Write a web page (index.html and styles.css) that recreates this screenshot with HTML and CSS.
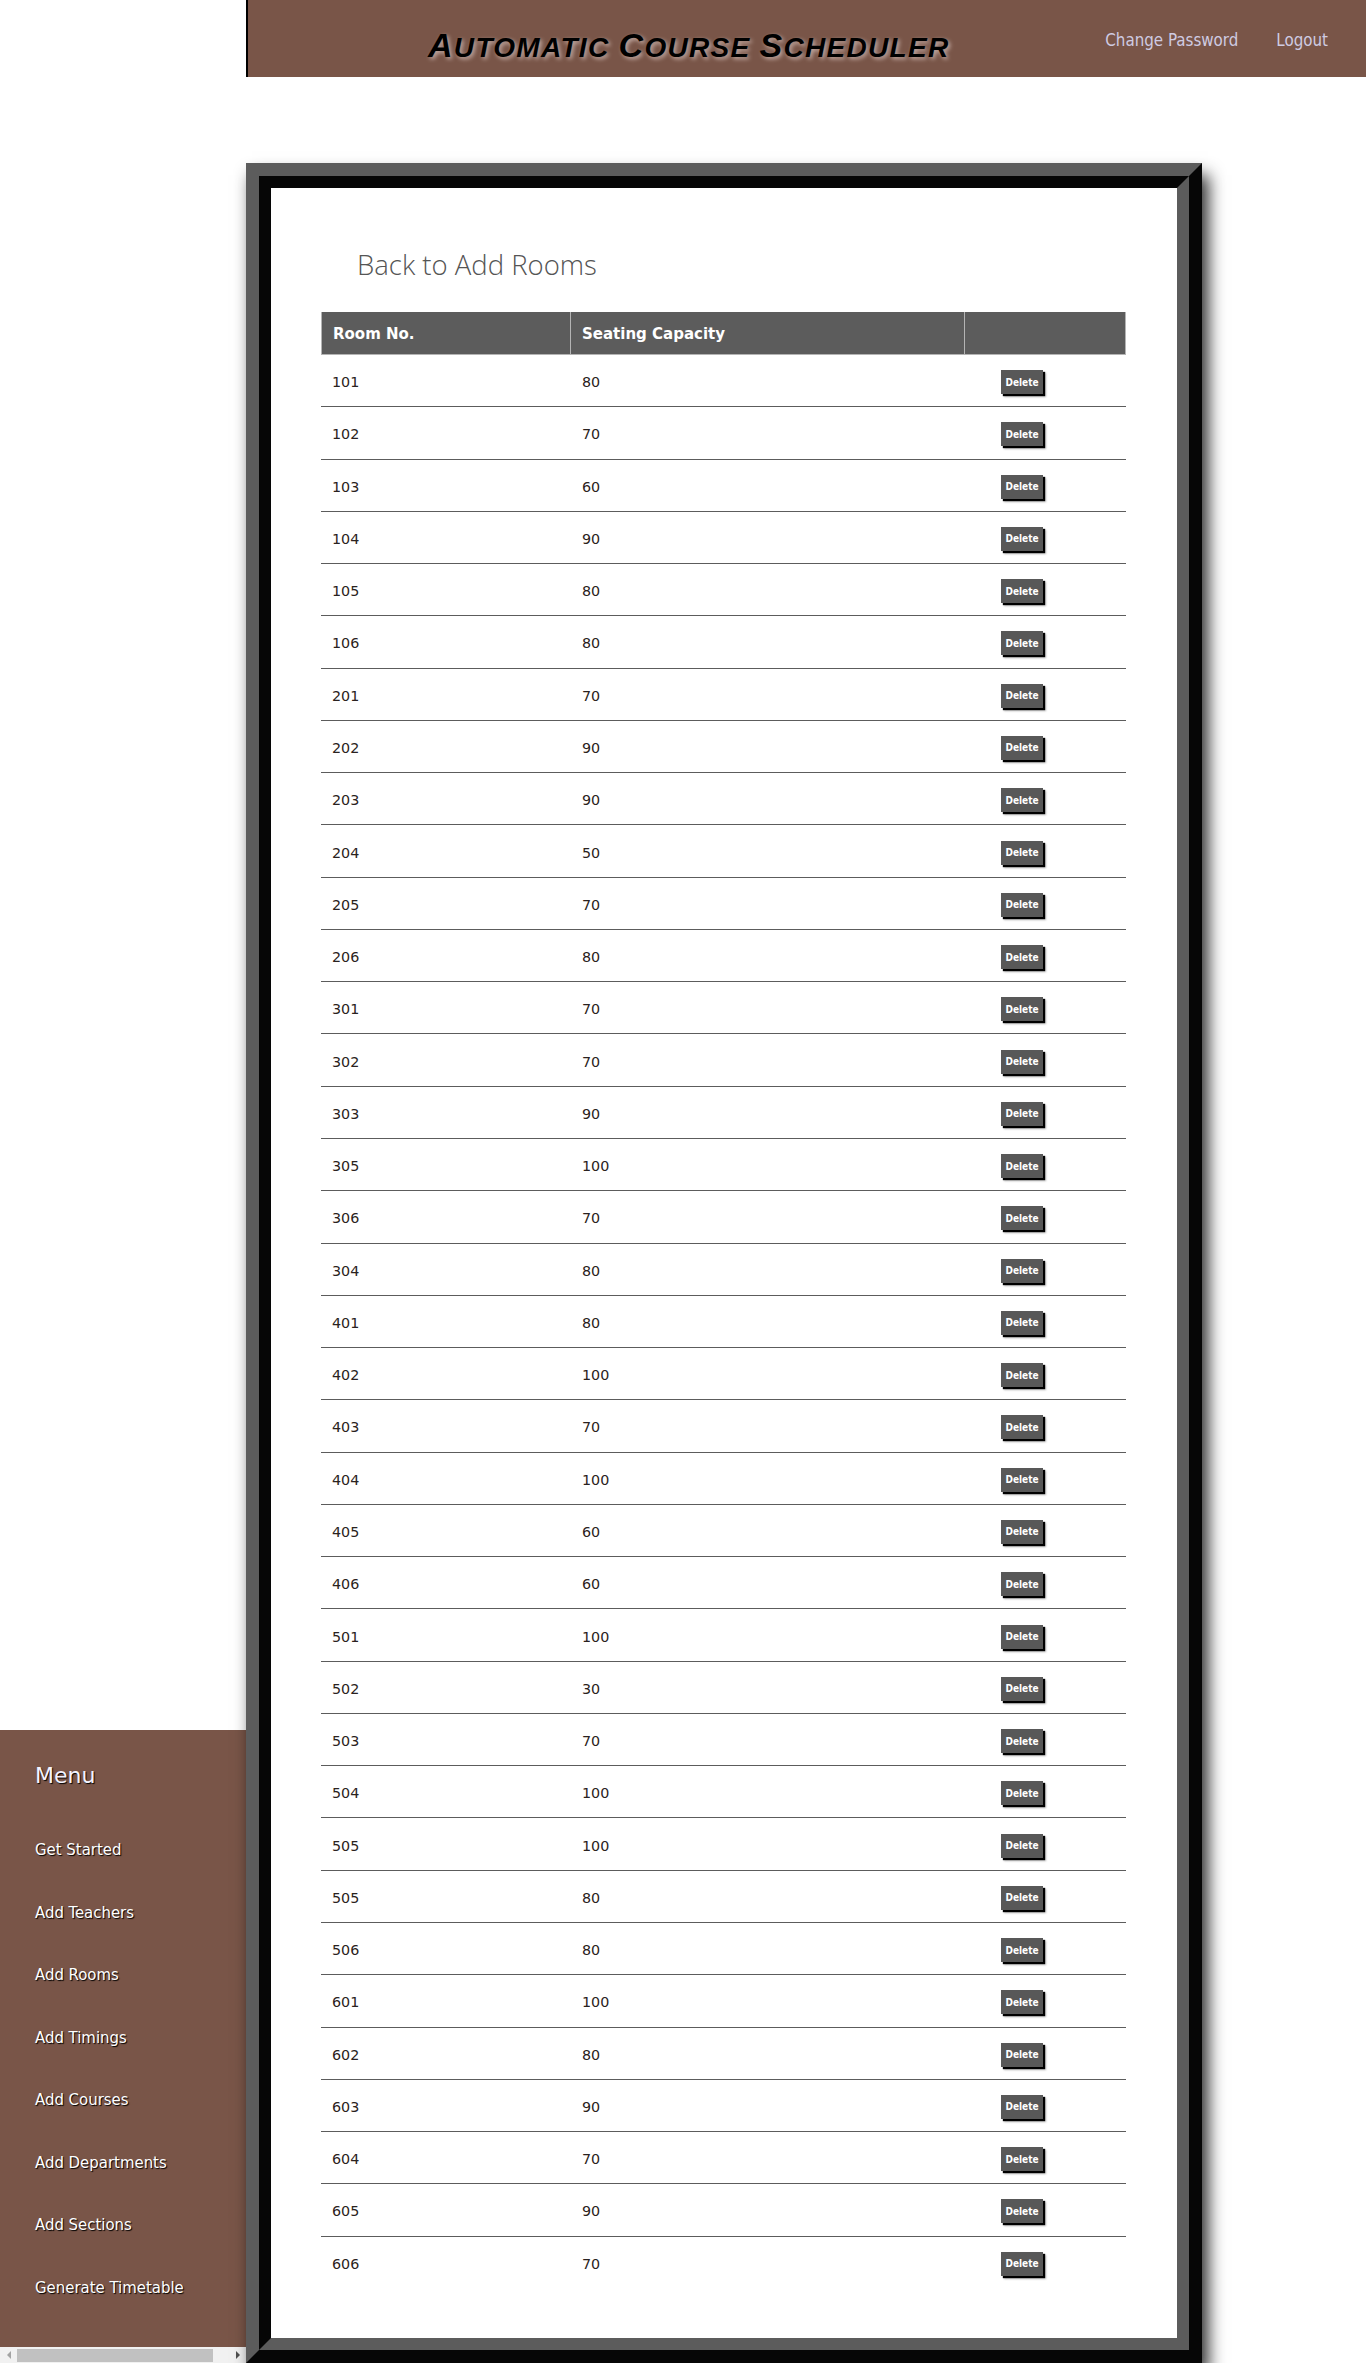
FILE: index.html
```html
<!DOCTYPE html>
<html lang="en">
<head>
<meta charset="utf-8">
<title>Automatic Course Scheduler - Rooms</title>
<link rel="stylesheet" href="styles.css">
</head>
<body>
<div class="layout">
  <aside class="sidebar">
    <div class="menu-title">Menu</div>
    <nav class="menu">
      <a href="#">Get Started</a>
      <a href="#">Add Teachers</a>
      <a href="#">Add Rooms</a>
      <a href="#">Add Timings</a>
      <a href="#">Add Courses</a>
      <a href="#">Add Departments</a>
      <a href="#">Add Sections</a>
      <a href="#">Generate Timetable</a>
    </nav>
    <div class="hscroll">
      <span class="arrow arrow-left"></span>
      <span class="track"><span class="thumb"></span></span>
      <span class="arrow arrow-right"></span>
    </div>
  </aside>

  <header class="topbar">
    <h1 class="title"><span class="big">A</span>utomatic <span class="big">C</span>ourse <span class="big">S</span>cheduler</h1>
    <nav class="toplinks">
      <a href="#">Change Password</a>
      <a href="#">Logout</a>
    </nav>
  </header>

  <main class="card">
    <div class="card-inner">
      <h2 class="back"><a href="#">Back to Add Rooms</a></h2>
      <table class="rooms">
        <colgroup><col class="c1"><col class="c2"><col class="c3"></colgroup>
        <thead>
          <tr><th>Room No.</th><th>Seating Capacity</th><th></th></tr>
        </thead>
        <tbody>
          <tr><td>101</td><td>80</td><td><button>Delete</button></td></tr>
          <tr><td>102</td><td>70</td><td><button>Delete</button></td></tr>
          <tr><td>103</td><td>60</td><td><button>Delete</button></td></tr>
          <tr><td>104</td><td>90</td><td><button>Delete</button></td></tr>
          <tr><td>105</td><td>80</td><td><button>Delete</button></td></tr>
          <tr><td>106</td><td>80</td><td><button>Delete</button></td></tr>
          <tr><td>201</td><td>70</td><td><button>Delete</button></td></tr>
          <tr><td>202</td><td>90</td><td><button>Delete</button></td></tr>
          <tr><td>203</td><td>90</td><td><button>Delete</button></td></tr>
          <tr><td>204</td><td>50</td><td><button>Delete</button></td></tr>
          <tr><td>205</td><td>70</td><td><button>Delete</button></td></tr>
          <tr><td>206</td><td>80</td><td><button>Delete</button></td></tr>
          <tr><td>301</td><td>70</td><td><button>Delete</button></td></tr>
          <tr><td>302</td><td>70</td><td><button>Delete</button></td></tr>
          <tr><td>303</td><td>90</td><td><button>Delete</button></td></tr>
          <tr><td>305</td><td>100</td><td><button>Delete</button></td></tr>
          <tr><td>306</td><td>70</td><td><button>Delete</button></td></tr>
          <tr><td>304</td><td>80</td><td><button>Delete</button></td></tr>
          <tr><td>401</td><td>80</td><td><button>Delete</button></td></tr>
          <tr><td>402</td><td>100</td><td><button>Delete</button></td></tr>
          <tr><td>403</td><td>70</td><td><button>Delete</button></td></tr>
          <tr><td>404</td><td>100</td><td><button>Delete</button></td></tr>
          <tr><td>405</td><td>60</td><td><button>Delete</button></td></tr>
          <tr><td>406</td><td>60</td><td><button>Delete</button></td></tr>
          <tr><td>501</td><td>100</td><td><button>Delete</button></td></tr>
          <tr><td>502</td><td>30</td><td><button>Delete</button></td></tr>
          <tr><td>503</td><td>70</td><td><button>Delete</button></td></tr>
          <tr><td>504</td><td>100</td><td><button>Delete</button></td></tr>
          <tr><td>505</td><td>100</td><td><button>Delete</button></td></tr>
          <tr><td>505</td><td>80</td><td><button>Delete</button></td></tr>
          <tr><td>506</td><td>80</td><td><button>Delete</button></td></tr>
          <tr><td>601</td><td>100</td><td><button>Delete</button></td></tr>
          <tr><td>602</td><td>80</td><td><button>Delete</button></td></tr>
          <tr><td>603</td><td>90</td><td><button>Delete</button></td></tr>
          <tr><td>604</td><td>70</td><td><button>Delete</button></td></tr>
          <tr><td>605</td><td>90</td><td><button>Delete</button></td></tr>
          <tr><td>606</td><td>70</td><td><button>Delete</button></td></tr>
        </tbody>
      </table>
    </div>
  </main>
</div>
</body>
</html>
```

FILE: styles.css
```css
html, body {
  margin: 0;
  padding: 0;
  background: #ffffff;
}

body {
  font-family: "DejaVu Sans", Verdana, sans-serif;
  color: #333333;
  overflow: hidden;
}

a {
  text-decoration: none;
}

.layout {
  display: grid;
  grid-template-columns: 246px 1fr;
  grid-template-rows: 77px auto;
}

/* ---------- sidebar ---------- */
.sidebar {
  grid-column: 1;
  grid-row: 1 / span 2;
  align-self: end;
  height: 633px;
  background: #795548;
  display: flex;
  flex-direction: column;
  box-sizing: border-box;
  padding-top: 33px;
}

.menu-title {
  padding-left: 35px;
  font-family: "DejaVu Sans", Verdana, sans-serif;
  font-size: 22px;
  line-height: 26px;
  color: #f4f4ff;
  text-shadow: 1px 1px 1px #000000;
}

.menu {
  display: flex;
  flex-direction: column;
  gap: 42.5px;
  margin-top: 51px;
  padding-left: 35px;
}

.menu a {
  font-family: "DejaVu Sans Condensed", "DejaVu Sans", sans-serif;
  font-size: 16.6px;
  line-height: 20px;
  color: #ffffff;
  text-shadow: 1px 1px 1px #000000;
}

.hscroll {
  margin-top: auto;
  height: 16px;
  background: #f1f1f1;
  display: flex;
  align-items: center;
}

.arrow {
  width: 17px;
  height: 16px;
  display: flex;
  align-items: center;
  justify-content: center;
  flex: none;
}

.arrow::before {
  content: "";
  width: 0;
  height: 0;
  border-top: 4px solid transparent;
  border-bottom: 4px solid transparent;
}

.arrow-left::before {
  border-right: 4px solid #a3a3a3;
}

.arrow-right::before {
  border-left: 4px solid #505050;
}

.track {
  flex: 1;
  height: 16px;
  display: flex;
  align-items: center;
}

.thumb {
  display: block;
  width: 196px;
  height: 13px;
  background: #c1c1c1;
}

/* ---------- top bar ---------- */
.topbar {
  grid-column: 2;
  grid-row: 1;
  height: 77px;
  background: #795548;
  border-left: 2px solid #000000;
  display: flex;
  align-items: flex-start;
  justify-content: space-between;
}

.title {
  margin: 25px 0 0 180px;
  font-family: "Liberation Sans", Arial, sans-serif;
  font-weight: bold;
  font-style: italic;
  text-transform: uppercase;
  font-size: 28px;
  line-height: 40px;
  letter-spacing: 1.3px;
  color: #000000;
  text-shadow: 2px 2px 4px rgba(225, 205, 200, 0.75);
}

.title .big {
  font-size: 34px;
}

.toplinks {
  display: flex;
  gap: 38px;
  margin: 30px 38px 0 0;
}

.toplinks a {
  font-family: "DejaVu Sans Condensed", "DejaVu Sans", sans-serif;
  font-size: 16.8px;
  line-height: 20px;
  color: #cfcbe2;
}

/* ---------- card ---------- */
.card {
  grid-column: 2;
  grid-row: 2;
  justify-self: start;
  margin-top: 86px;
  width: 956px;
  height: 2200px;
  box-sizing: border-box;
  border: 13px solid;
  border-color: #5c5c5c #060606 #060606 #5c5c5c;
  box-shadow: 6px 12px 16px rgba(0, 0, 0, 0.85);
  display: flex;
}

.card-inner {
  flex: 1;
  background: #ffffff;
  border: 12px solid;
  border-color: #060606 #5c5c5c #5c5c5c #060606;
  padding: 58px 51px 0 50px;
}

.back {
  margin: 0 0 28px 36px;
  font-family: "Open Sans", "Noto Sans", sans-serif;
  font-weight: 300;
  font-size: 27.5px;
  line-height: 38px;
}

.back a {
  color: #555555;
}

/* ---------- table ---------- */
.rooms {
  width: 805px;
  table-layout: fixed;
  border-collapse: separate;
  border-spacing: 0;
}

.rooms col.c1 { width: 250px; }
.rooms col.c2 { width: 394px; }
.rooms col.c3 { width: 161px; }

.rooms th {
  height: 43px;
  box-sizing: border-box;
  padding: 2px 11px 0;
  background: #5c5c5c;
  color: #ffffff;
  text-align: left;
  vertical-align: middle;
  font-size: 15px;
  font-weight: bold;
  border-bottom: 1px solid #b4b4b4;
  border-right: 1px solid #b4b4b4;
}

.rooms th:first-child {
  border-left: 1px solid #b4b4b4;
}

.rooms td {
  height: 52.28px;
  box-sizing: border-box;
  padding: 3px 11px 0;
  vertical-align: middle;
  font-size: 14.3px;
  color: #2a2220;
  border-bottom: 1px solid #5c5c5c;
}

.rooms td:last-child {
  padding-left: 36px;
}

.rooms tbody tr:last-child td {
  border-bottom-color: transparent;
}

.rooms button {
  display: block;
  width: 42px;
  height: 24px;
  padding: 0;
  border: none;
  background: #585858;
  color: #ffffff;
  font-family: "DejaVu Sans Condensed", "DejaVu Sans", sans-serif;
  font-weight: bold;
  font-size: 10px;
  box-shadow: 2px 2px 1px #000000, 3px 3px 2px rgba(0, 0, 0, 0.3);
}
```
